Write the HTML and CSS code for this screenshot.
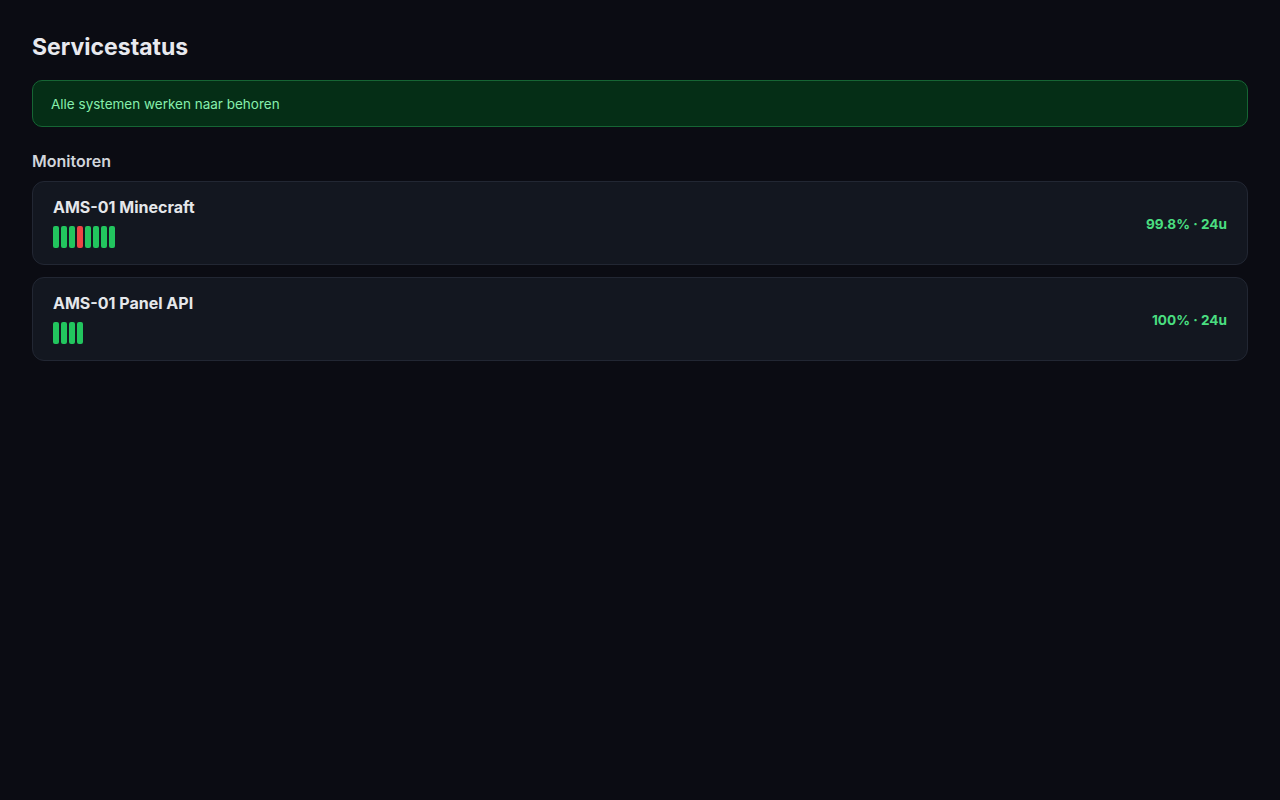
FILE: index.html
```html
<!DOCTYPE html>
<html lang="nl">
<head>
<meta charset="utf-8">
<title>Servicestatus</title>
<link rel="stylesheet" href="styles.css">
</head>
<body>
<main class="page">
  <h1 class="title">Servicestatus</h1>
  <div class="banner">Alle systemen werken naar behoren</div>
  <h2 class="section-title">Monitoren</h2>
  <div class="monitors">
    <div class="card">
      <div class="card-main">
        <div class="name">AMS-01 Minecraft</div>
        <div class="bars">
          <span class="bar up"></span><span class="bar up"></span><span class="bar up"></span><span class="bar down"></span><span class="bar up"></span><span class="bar up"></span><span class="bar up"></span><span class="bar up"></span>
        </div>
      </div>
      <div class="uptime">99.8% · 24u</div>
    </div>
    <div class="card">
      <div class="card-main">
        <div class="name">AMS-01 Panel API</div>
        <div class="bars">
          <span class="bar up"></span><span class="bar up"></span><span class="bar up"></span><span class="bar up"></span>
        </div>
      </div>
      <div class="uptime">100% · 24u</div>
    </div>
  </div>
</main>
</body>
</html>
```

FILE: styles.css
```css
* { box-sizing: border-box; }
html, body {
  margin: 0;
  padding: 0;
  background: #0b0c13;
  font-family: Inter, "Noto Sans", sans-serif;
  color: #e5e7eb;
}
.page {
  padding: 32px;
}
.title {
  margin: 1px 0 0;
  font-size: 23px;
  line-height: 28px;
  font-weight: 700;
  color: #e8e9ee;
}
.banner {
  margin-top: 19px;
  padding: 15px 18px 14px;
  font-size: 13.5px;
  line-height: 16px;
  color: #86efac;
  background: #052e16;
  border: 1px solid #166534;
  border-radius: 10px;
}
.section-title {
  margin: 25px 0 11px;
  font-size: 16px;
  line-height: 18px;
  font-weight: 600;
  color: #d1d5db;
}
.monitors {
  display: flex;
  flex-direction: column;
  gap: 12px;
}
.card {
  display: flex;
  align-items: center;
  justify-content: space-between;
  padding: 16px 20px;
  background: #131720;
  border: 1px solid #222733;
  border-radius: 12px;
}
.card-main {
  display: flex;
  flex-direction: column;
  gap: 9px;
}
.name {
  font-size: 16px;
  line-height: 20px;
  font-weight: 700;
  color: #e5e7eb;
  margin-top: -1px;
}
.bars {
  display: flex;
  gap: 2px;
}
.bar {
  width: 6px;
  height: 22px;
  border-radius: 2px;
}
.bar.up { background: #22c55e; }
.bar.down { background: #ef4444; }
.uptime {
  font-size: 13.6px;
  line-height: 16px;
  font-weight: 700;
  color: #4ade80;
  margin-top: 2px;
}
```
